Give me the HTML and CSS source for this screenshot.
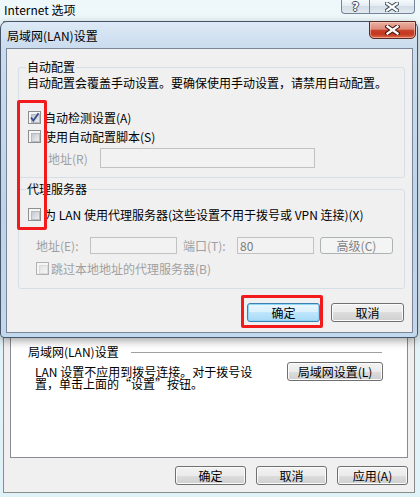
FILE: index.html
```html
<!DOCTYPE html>
<html lang="zh-CN">
<head>
    <meta charset="UTF-8">
    <meta name="viewport" content="width=device-width, initial-scale=1.0">
    <title>局域网(LAN)设置</title>
    <link rel="stylesheet" href="styles.css">
</head>
<body>
    <!-- Internet 选项 (window behind) -->
    <div class="outer">
        <div class="outer-title">
            <span class="outer-caption">Internet 选项</span>
            <div class="caption-btns">
                <span class="cap-btn cap-help">?</span>
                <span class="cap-btn cap-close">
                    <svg width="14" height="10" viewBox="0 0 14 10">
                        <path d="M2 1.5 L12 8.5 M12 1.5 L2 8.5" stroke="#3b4a5a" stroke-width="4.2" stroke-linecap="square"/>
                        <path d="M2 1.5 L12 8.5 M12 1.5 L2 8.5" stroke="#fff" stroke-width="2.2" stroke-linecap="square"/>
                    </svg>
                </span>
            </div>
        </div>
        <div class="outer-client">
            <div class="tab-page">
                <div class="lan-group">
                    <div class="lan-head">
                        <span>局域网(LAN)设置</span>
                        <span class="lan-line"></span>
                    </div>
                    <div class="lan-body">
                        <p class="lan-text">LAN 设置不应用到拨号连接。对于拨号设置，单击上面的“设置”按钮。</p>
                        <button class="btn lan-btn">局域网设置(L)</button>
                    </div>
                </div>
            </div>
            <div class="outer-btns">
                <button class="btn">确定</button>
                <button class="btn">取消</button>
                <button class="btn">应用(A)</button>
            </div>
        </div>
    </div>

    <!-- 局域网(LAN)设置 dialog -->
    <div class="lan-dialog">
        <div class="dlg-title">局域网(LAN)设置</div>
        <span class="dlg-close">
            <svg width="15" height="10" viewBox="0 0 15 10">
                <path d="M2.5 1.5 L12.5 8.5 M12.5 1.5 L2.5 8.5" stroke="#4a1a12" stroke-width="4.4" stroke-linecap="square"/>
                <path d="M2.5 1.5 L12.5 8.5 M12.5 1.5 L2.5 8.5" stroke="#fff" stroke-width="2.3" stroke-linecap="square"/>
            </svg>
        </span>
        <div class="dlg-client">
            <fieldset class="group group-auto">
                <legend>自动配置</legend>
                <div class="desc">自动配置会覆盖手动设置。要确保使用手动设置，请禁用自动配置。</div>
                <label class="check-row row-first">
                    <span class="check">
                        <svg width="11" height="11" viewBox="0 0 11 11">
                            <path d="M2 5.5 L4.3 8.6 L9.6 1.2" stroke="#3a4f92" stroke-width="1.8" fill="none"/>
                        </svg>
                    </span>
                    自动检测设置(A)
                </label>
                <label class="check-row row-next">
                    <span class="check"></span>
                    使用自动配置脚本(S)
                </label>
                <div class="field-row addr-row">
                    <span class="field-label disabled addr-label">地址(R)</span>
                    <span class="field addr-field"></span>
                </div>
            </fieldset>

            <fieldset class="group group-proxy">
                <legend>代理服务器</legend>
                <label class="check-row proxy-check">
                    <span class="check"></span>
                    为 LAN 使用代理服务器(这些设置不用于拨号或 VPN 连接)(X)
                </label>
                <div class="field-row proxy-row">
                    <span class="field-label disabled">地址(E):</span>
                    <span class="field proxy-addr"></span>
                    <span class="field-label disabled port-label">端口(T):</span>
                    <span class="field port-field">80</span>
                    <button class="btn adv-btn" disabled>高级(C)</button>
                </div>
                <label class="check-row bypass-row disabled">
                    <span class="check check-off"></span>
                    跳过本地地址的代理服务器(B)
                </label>
            </fieldset>

            <div class="dlg-btns">
                <button class="btn btn-default">确定</button>
                <button class="btn">取消</button>
            </div>
        </div>
    </div>

    <!-- red highlight marks -->
    <div class="mark mark-checks"></div>
    <div class="mark mark-ok"></div>
</body>
</html>
```

FILE: styles.css
```css
* {
    box-sizing: border-box;
}

body {
    margin: 0;
    width: 420px;
    height: 497px;
    overflow: hidden;
    position: relative;
    font-family: "Noto Sans CJK SC", "Noto Sans", sans-serif;
    font-size: 12px;
    color: #000;
    background: #e3f3f8;
}

button {
    font-family: inherit;
    font-size: 12px;
    color: #000;
    padding: 0;
}

/* ---- outer window ---- */

.outer {
    width: 420px;
    height: 497px;
    background: linear-gradient(#eef8fa, #e4f4f9 60%, #dff2f8);
}

.outer-title {
    height: 21px;
    display: flex;
    justify-content: space-between;
}

.outer-caption {
    padding: 3px 0 0 4px;
    line-height: 14px;
}

.caption-btns {
    display: flex;
    margin-right: 5px;
}

.cap-btn {
    height: 14px;
    border: 1px solid #74859a;
    border-top: none;
    background: linear-gradient(#f5f9fb, #e3ebf1 50%, #d3dde6 50%, #e2eaf0);
    display: flex;
    align-items: center;
    justify-content: center;
}

.cap-help {
    width: 28px;
    border-right: none;
    border-radius: 0 0 0 4px;
    font-family: "DejaVu Sans", sans-serif;
    font-weight: bold;
    font-size: 12px;
    line-height: 12px;
    color: #fff;
    text-shadow: 1px 0 0 #3b4a5a, -1px 0 0 #3b4a5a, 0 1px 0 #3b4a5a, 0 -1px 0 #3b4a5a;
}

.cap-close {
    width: 46px;
    border-radius: 0 0 4px 0;
}

.outer-client {
    margin-left: 3px;
    width: 412px;
    border: 1px solid #8b8b8b;
    background: #f0f0f0;
    padding: 0 6px 7px 6px;
}

.tab-page {
    height: 436px;
    background: #fff;
    border: 1px solid #898c95;
}

.lan-group {
    margin-top: 323px;
}

.lan-head {
    display: flex;
    align-items: center;
    height: 12px;
    line-height: 12px;
    padding: 0 25px 0 17px;
}

.lan-line {
    flex: 1;
    height: 1px;
    margin-left: 12px;
    background: #a0a0a0;
}

.lan-body {
    display: flex;
    justify-content: space-between;
    align-items: flex-start;
    margin-top: 4px;
    padding: 0 24px 0 24px;
}

.lan-text {
    margin: 4px 0 0;
    width: 220px;
    line-height: 12px;
}

.lan-btn {
    width: 96px;
    height: 19px;
}

.outer-btns {
    display: flex;
    justify-content: flex-end;
    gap: 10px;
    margin-top: 8px;
}

.outer-btns .btn {
    width: 71px;
    height: 19px;
}

/* ---- buttons ---- */

.btn {
    border: 1px solid #707070;
    border-radius: 3px;
    background: linear-gradient(#f2f2f2, #ebebeb 50%, #dddddd 50%, #cfcfcf);
    box-shadow: inset 0 0 0 1px #fbfbfb;
    line-height: 15px;
}

.btn-default {
    border-color: #3c7fb1;
    background: linear-gradient(#eaf6fd, #d9f0fc 50%, #bee6fd 50%, #a7d9f5);
    box-shadow: inset 0 0 0 1px #8fd6f8;
}

.btn:disabled {
    border-color: #adb2b5;
    background: #f4f4f4;
    box-shadow: none;
    color: #838383;
}

/* ---- LAN dialog ---- */

.lan-dialog {
    position: absolute;
    left: 0;
    top: 21px;
    width: 418px;
    height: 317px;
    border: 1px solid #47566a;
    border-radius: 7px 7px 4px 4px;
    background: linear-gradient(#dde9f5, #cadcee 26px, #bcd4eb 60%, #c2d8ed);
    box-shadow: 0 3px 8px rgba(0, 0, 0, 0.35);
}

.dlg-title {
    height: 26px;
    padding: 7px 0 0 6px;
    line-height: 13px;
}

.dlg-close {
    position: absolute;
    left: 368px;
    top: -1px;
    width: 47px;
    height: 18px;
    border: 1px solid #5a2a22;
    border-radius: 0 0 5px 5px;
    background: linear-gradient(#eab1a3, #dc8a77 45%, #c8412a 52%, #c4361f 75%, #dc6c4a);
    box-shadow: inset 0 0 0 1px rgba(255, 210, 200, 0.55);
    display: flex;
    align-items: center;
    justify-content: center;
}

.dlg-client {
    margin: 0 4px 0 5px;
    height: 285px;
    border: 1px solid #7b8796;
    background: #f0f0f0;
    padding: 12px 7px 0 11px;
}

.group {
    margin: 0;
    border: 1px solid #d5dfe5;
    border-radius: 3px;
    min-width: 0;
}

.group legend {
    padding: 0 1px;
    margin-left: -1px;
    line-height: 12px;
}

.group-auto {
    padding: 4px 8px 9px 8px;
}

.group-proxy {
    margin-top: 5px;
    padding: 13px 8px 13px 8px;
}

.desc {
    line-height: 12px;
}

.check-row {
    display: flex;
    align-items: center;
    gap: 3px;
    height: 13px;
    line-height: 13px;
    margin-left: 1px;
    white-space: nowrap;
}

.row-first {
    margin-top: 22px;
}

.row-next {
    margin-top: 6px;
}

.check {
    position: relative;
    flex: none;
    width: 13px;
    height: 13px;
    border: 1px solid #8e8f8f;
    background: #f6f6f6;
}

.check::before {
    content: "";
    position: absolute;
    left: 2px;
    top: 2px;
    width: 7px;
    height: 7px;
    border: 1px solid #b7bbc1;
    background: linear-gradient(135deg, #c4c8ce, #eeeff1);
}

.check svg {
    position: absolute;
    left: 0;
    top: 0;
}

.check-off {
    border-color: #b1b1b1;
}

.check-off::before {
    border-color: #dadada;
    background: linear-gradient(135deg, #e2e2e2, #f7f7f7);
}

.disabled {
    color: #a0a0a0;
}

.field-row {
    display: flex;
    align-items: center;
}

.field-label {
    flex: none;
}

.field {
    flex: none;
    border: 1px solid #c2c2c2;
    background: #f2f2f2;
}

.addr-row {
    margin-top: 5px;
    height: 20px;
}

.addr-label {
    width: 52px;
    margin-left: 21px;
}

.addr-field {
    width: 215px;
    height: 20px;
}

.proxy-check {
    gap: 3px;
}

.proxy-row {
    margin-top: 16px;
    height: 17px;
    padding-left: 9px;
}

.proxy-row .field-label {
    width: 54px;
}

.proxy-addr {
    width: 87px;
    height: 17px;
}

.port-label {
    margin-left: 6px;
}

.port-field {
    width: 77px;
    height: 17px;
    padding-left: 2px;
    line-height: 15px;
    color: #7a7a7a;
}

.adv-btn {
    width: 73px;
    height: 17px;
    margin-left: 6px;
    line-height: 14px;
}

.bypass-row {
    margin-top: 8px;
    margin-left: 9px;
    gap: 2px;
}

.dlg-btns {
    display: flex;
    justify-content: flex-end;
    gap: 11px;
    margin-top: 14px;
    padding-right: 1px;
}

.dlg-btns .btn {
    width: 73px;
    height: 19px;
}

/* ---- red highlight marks ---- */

.mark {
    position: absolute;
    border: 3px solid #f21a1a;
    border-radius: 2px;
}

.mark-checks {
    left: 17px;
    top: 100px;
    width: 30px;
    height: 130px;
}

.mark-ok {
    left: 241px;
    top: 295px;
    width: 82px;
    height: 33px;
}
```
